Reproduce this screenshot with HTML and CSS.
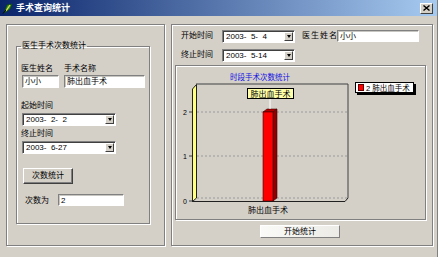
FILE: index.html
```html
<!DOCTYPE html>
<html lang="zh">
<head>
    <meta charset="UTF-8">
    <title>手术查询统计</title>
    <link rel="stylesheet" href="styles.css">
</head>
<body>
    <div class="window">
        <div class="titlebar">
            <svg class="app-icon" width="11" height="11" viewBox="0 0 11 11">
                <path d="M2 10 L5 2 L10 1 L8 6 Z" fill="#2f8f2f" stroke="#0b4d0b" stroke-width="0.8"/>
                <path d="M4 8 L8 2" stroke="#f4e04a" stroke-width="1.2"/>
                <path d="M1 10.5 L4 7" stroke="#000" stroke-width="1"/>
            </svg>
            <span class="title">手术查询统计</span>
            <span class="close-btn">
                <svg width="7" height="6" viewBox="0 0 7 6"><path d="M0.5 0.5 L6.5 5.5 M6.5 0.5 L0.5 5.5" stroke="#000" stroke-width="1.4"/></svg>
            </span>
        </div>

        <div class="client">
            <!-- left: count by doctor -->
            <div class="panel panel-left">
                <fieldset class="group">
                    <legend>医生手术次数统计</legend>
                    <div class="name-row">
                        <div class="field">
                            <span class="lbl">医生姓名</span>
                            <div class="input w-doctor">小小</div>
                        </div>
                        <div class="field">
                            <span class="lbl">手术名称</span>
                            <div class="input w-op">肺出血手术</div>
                        </div>
                    </div>
                    <span class="lbl lbl-start">起始时间</span>
                    <div class="combo w-date">
                        <span class="combo-text">2003-  2-  2</span>
                        <span class="combo-btn"><i class="arrow"></i></span>
                    </div>
                    <span class="lbl lbl-end">终止时间</span>
                    <div class="combo w-date">
                        <span class="combo-text">2003-  6-27</span>
                        <span class="combo-btn"><i class="arrow"></i></span>
                    </div>
                    <div class="btn btn-count">次数统计</div>
                    <div class="result-row">
                        <span class="lbl">次数为</span>
                        <div class="input w-result">2</div>
                    </div>
                </fieldset>
            </div>

            <!-- right: chart by period -->
            <div class="panel panel-right">
                <div class="form-row">
                    <span class="lbl row-lbl">开始时间</span>
                    <div class="combo w-date2">
                        <span class="combo-text">2003-  5-  4</span>
                        <span class="combo-btn"><i class="arrow"></i></span>
                    </div>
                    <span class="lbl doc-lbl">医生姓名</span>
                    <div class="input w-doctor2">小小</div>
                </div>
                <div class="form-row row2">
                    <span class="lbl row-lbl">终止时间</span>
                    <div class="combo w-date2">
                        <span class="combo-text">2003-  5-14</span>
                        <span class="combo-btn"><i class="arrow"></i></span>
                    </div>
                </div>

                <div class="chart-box">
                    <svg class="chart" width="249" height="153" viewBox="176 65 249 153">
                        <text x="260" y="79" text-anchor="middle" fill="#1010e0" class="chart-title">时段手术次数统计</text>

                        <!-- back wall and grid -->
                        <line x1="196" y1="83" x2="348" y2="83" stroke="#404040"/>
                        <line x1="348" y1="83" x2="348" y2="197" stroke="#404040"/>
                        <line x1="197" y1="111" x2="347" y2="111" stroke="#9a9a9a" stroke-dasharray="2 2"/>
                        <line x1="197" y1="155" x2="347" y2="155" stroke="#9a9a9a" stroke-dasharray="2 2"/>
                        <line x1="197" y1="197" x2="347" y2="197" stroke="#9a9a9a" stroke-dasharray="2 2"/>
                        <line x1="192" y1="200.5" x2="345" y2="200.5" stroke="#202020"/>
                        <line x1="345" y1="200.5" x2="348" y2="197" stroke="#202020"/>

                        <!-- left wall -->
                        <polygon points="192.5,88 196.5,83.5 196.5,197 192.5,200.5" fill="#ffff80" stroke="#202020" stroke-width="1"/>

                        <!-- y axis -->
                        <line x1="189" y1="111" x2="192" y2="111" stroke="#404040"/>
                        <line x1="189" y1="155" x2="192" y2="155" stroke="#404040"/>
                        <line x1="189" y1="200" x2="192" y2="200" stroke="#404040"/>
                        <text x="187" y="114" text-anchor="end" class="axis">2</text>
                        <text x="187" y="158" text-anchor="end" class="axis">1</text>
                        <text x="187" y="203" text-anchor="end" class="axis">0</text>

                        <!-- bar -->
                        <polygon points="263,111 267,108 277,108 273,111" fill="#b00000" stroke="#400000" stroke-width="0.6"/>
                        <polygon points="273,111 277,108 277,197 273,200" fill="#900000" stroke="#400000" stroke-width="0.6"/>
                        <rect x="263" y="111" width="10" height="89" fill="#ff0000" stroke="#400000" stroke-width="0.6"/>

                        <!-- mark label -->
                        <line x1="270" y1="97" x2="270" y2="108" stroke="#ffffff"/>
                        <rect x="247.5" y="87.5" width="46" height="10" fill="#ffffa8" stroke="#000"/>
                        <text x="270.5" y="95.5" text-anchor="middle" class="mark">肺出血手术</text>

                        <text x="268" y="212" text-anchor="middle" class="axis-cat">肺出血手术</text>

                        <!-- legend -->
                        <rect x="357" y="83" width="59" height="11" fill="#000"/>
                        <rect x="355.5" y="81.5" width="58" height="10" fill="#fff" stroke="#000"/>
                        <rect x="358.5" y="83.5" width="5" height="6" fill="#ff0000" stroke="#600000"/>
                        <text x="366" y="90" class="legend">2 肺出血手术</text>
                    </svg>
                </div>

                <div class="btn btn-start">开始统计</div>
            </div>
        </div>
    </div>
</body>
</html>
```

FILE: styles.css
```css
body {
    margin: 0;
    font-family: "Liberation Sans", "Noto Sans CJK SC", sans-serif;
    font-size: 8px;
    color: #000;
}
.window {
    width: 438px;
    height: 257px;
    background: #d4d0c8;
    overflow: hidden;
    box-sizing: border-box;
    border-right: 1px solid #808080;
}
.titlebar {
    height: 16px;
    display: flex;
    align-items: center;
    padding: 0 4px 0 2px;
    background: linear-gradient(90deg, #0a246a, #a6caf0);
    color: #fff;
}
.app-icon {
    margin-right: 3px;
}
.title {
    font-size: 9px;
    font-weight: bold;
    line-height: 16px;
}
.close-btn {
    margin-left: auto;
    width: 13px;
    height: 11px;
    display: flex;
    align-items: center;
    justify-content: center;
    background: #d4d0c8;
    border: 1px solid;
    border-color: #fff #404040 #404040 #fff;
    box-sizing: border-box;
}

.client {
    display: flex;
    gap: 6px;
    padding: 8px 0 0 6px;
}
.panel {
    height: 222px;
    box-sizing: border-box;
    border: 1px solid #808080;
    box-shadow: inset 1px 1px #fff, 1px 1px #fff;
}
.panel-left {
    width: 159px;
    padding-left: 9px;
}
.panel-right {
    width: 262px;
}

.lbl {
    display: block;
    line-height: 10px;
    white-space: nowrap;
}

/* left group */
.group {
    margin: 16px 0 0;
    width: 133px;
    height: 183px;
    box-sizing: border-box;
    padding: 0 4px;
    border: 1px solid #808080;
    box-shadow: inset 1px 1px #fff, 1px 1px #fff;
}
.group legend {
    padding: 0 1px;
    line-height: 10px;
}
.name-row {
    display: flex;
    gap: 5px;
    margin-top: 13px;
}
.field .input {
    margin-top: 1px;
}

.input {
    height: 13px;
    box-sizing: border-box;
    background: #fff;
    border: 1px solid;
    border-color: #808080 #fff #fff #808080;
    box-shadow: inset 1px 1px #c8c6c0;
    line-height: 11px;
    padding-left: 2px;
    white-space: nowrap;
}
.w-doctor { width: 37px; margin-left: 1px; }
.w-op { width: 81px; }
.w-result { width: 66px; height: 12px; }
.w-doctor2 { width: 82px; height: 12px; }

.combo {
    display: flex;
    height: 13px;
    box-sizing: border-box;
    background: #fff;
    border: 1px solid;
    border-color: #808080 #fff #fff #808080;
    box-shadow: inset 1px 1px #404040;
}
.combo-text {
    flex: 1;
    padding-left: 3px;
    line-height: 11px;
    white-space: pre;
}
.combo-btn {
    width: 9px;
    margin: 1px 1px 1px 0;
    box-sizing: border-box;
    background: #d4d0c8;
    border: 1px solid;
    border-color: #fff #404040 #404040 #fff;
    display: flex;
    align-items: center;
    justify-content: center;
}
.arrow {
    width: 0;
    height: 0;
    border-left: 2.5px solid transparent;
    border-right: 2.5px solid transparent;
    border-top: 3px solid #000;
}
.w-date { width: 94px; margin-left: 1px; }
.w-date2 { width: 73px; }

.lbl-start { margin-top: 13px; }
.lbl-end { margin-top: 3px; }
.lbl + .combo { margin-top: 2px; }

.btn {
    box-sizing: border-box;
    text-align: center;
    background: #d4d0c8;
    border: 1px solid;
    border-color: #fff #404040 #404040 #fff;
    box-shadow: inset -1px -1px #808080;
    white-space: nowrap;
}
.btn-count {
    width: 50px;
    height: 16px;
    line-height: 14px;
    margin: 14px 0 0 2px;
}
.result-row {
    display: flex;
    align-items: flex-end;
    margin-top: 10px;
    padding-left: 4px;
}
.result-row .lbl {
    width: 33px;
}

/* right panel */
.form-row {
    display: flex;
    align-items: center;
    margin: 3px 0 0 9px;
}
.row2 {
    margin-top: 4px;
}
.row-lbl {
    width: 41px;
}
.doc-lbl {
    margin-left: 7px;
    letter-spacing: 1px;
    width: 35px;
}
.chart-box {
    margin: 3px 0 0 3px;
    width: 251px;
    height: 155px;
    box-sizing: border-box;
    border: 1px solid #808080;
    box-shadow: inset 1px 1px #fff, 1px 1px #fff;
}
.chart {
    display: block;
    font-size: 8px;
}
.chart .chart-title {
    font-size: 7.5px;
}
.chart .axis {
    font-size: 7px;
}
.chart .legend {
    font-size: 7.5px;
}
.btn-start {
    width: 80px;
    height: 13px;
    line-height: 11px;
    margin: 5px 0 0 88px;
    background: linear-gradient(90deg, #fafaf8, #ecebe6);
    border-color: #fff #808080 #808080 #fff;
    box-shadow: none;
}
```
